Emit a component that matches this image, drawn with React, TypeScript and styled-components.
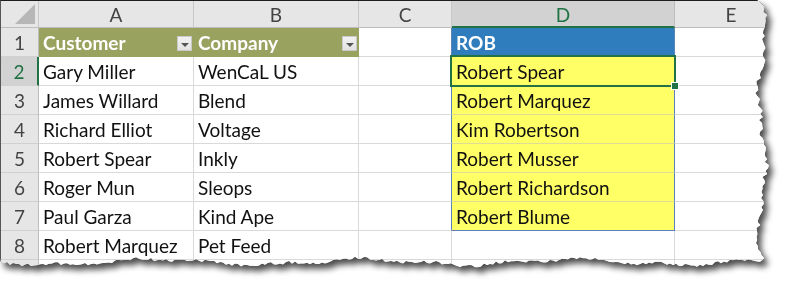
import React from 'react';
import styled, { createGlobalStyle, css } from 'styled-components';

const GlobalStyle = createGlobalStyle`
  html, body { margin: 0; padding: 0; background: #ffffff; }
  body { font-family: Lato, "Noto Sans", sans-serif; }
  #root { width: 788px; height: 289px; }
`;

function makeTorn(): string {
  let seed = 11;
  const rnd = () => {
    seed = (seed * 16807) % 2147483647;
    return seed / 2147483647;
  };
  const pts: string[] = ['0px 0px', '757px 0px'];
  for (let y = 3; y <= 261; y += 3) {
    const wave = Math.sin(y / 21) * 3.4 + Math.sin(y / 8) * 1.6;
    const x = 762 + wave + (rnd() - 0.5) * 4.5;
    pts.push(`${x.toFixed(1)}px ${y}px`);
  }
  for (let x = 760; x >= 0; x -= 3) {
    const wave = Math.sin(x / 33) * 2.8 + Math.sin(x / 12) * 1.3;
    const y = 262 + wave + (rnd() - 0.5) * 3.2;
    pts.push(`${x}px ${y.toFixed(1)}px`);
  }
  pts.push('0px 259px');
  return `polygon(${pts.join(', ')})`;
}

const TORN = makeTorn();

const GREEN = '#217346';
const GRID = '#d9d9d9';
const RANGE = '#5d82b8';

const Frame = styled.div`
  width: 788px;
  height: 289px;
  filter: drop-shadow(0.8px 0.8px 0 #111111) drop-shadow(4px 5px 3px rgba(0, 0, 0, 0.7));
`;

const Sheet = styled.div`
  box-sizing: border-box;
  width: 788px;
  height: 289px;
  display: grid;
  grid-template-columns: 38px 155px 165px 93px 223px 113px;
  grid-template-rows: 27px repeat(9, 29px);
  background: #ffffff;
  border-top: 1px solid #1e1e1e;
  border-left: 1px solid #555;
  clip-path: ${TORN};
  font-family: Lato, "Noto Sans", sans-serif;
  font-size: 19px;
  color: #111;
`;

const Corner = styled.div`
  box-sizing: border-box;
  background: #e6e6e6;
  border-right: 1px solid #c8c8c8;
  border-bottom: 1px solid #bdbdbd;
  position: relative;
  &::after {
    content: '';
    position: absolute;
    right: 3px;
    bottom: 3px;
    width: 0;
    height: 0;
    border-left: 20px solid transparent;
    border-bottom: 20px solid #b7b7b7;
  }
`;

const ColHead = styled.div<{ $selected?: boolean }>`
  box-sizing: border-box;
  display: flex;
  align-items: center;
  justify-content: center;
  background: #e6e6e6;
  color: #444;
  border-right: 1px solid #c8c8c8;
  border-bottom: 1px solid #bdbdbd;
  padding-top: 1px;
  ${(p) =>
    p.$selected &&
    css`
      background: #d2d2d2;
      color: ${GREEN};
      border-bottom: 2px solid ${GREEN};
      border-right-color: #bdbdbd;
    `}
`;

const RowHead = styled.div<{ $selected?: boolean }>`
  box-sizing: border-box;
  display: flex;
  align-items: center;
  justify-content: center;
  background: #e6e6e6;
  color: #444;
  border-right: 1px solid #bdbdbd;
  border-bottom: 1px solid #d0d0d0;
  padding-top: 1px;
  ${(p) =>
    p.$selected &&
    css`
      background: #d2d2d2;
      color: ${GREEN};
      border-right: 2px solid ${GREEN};
    `}
`;

type Tone = 'plain' | 'olive' | 'blue' | 'yellow';

const tones: Record<Tone, ReturnType<typeof css>> = {
  plain: css`
    background: #ffffff;
  `,
  olive: css`
    background: #9aa25f;
    color: #ffffff;
    font-weight: 700;
    border-right-color: #9aa25f;
    border-bottom-color: #9aa25f;
  `,
  blue: css`
    background: #2f7dbd;
    color: #ffffff;
    font-weight: 700;
    border-right-color: ${RANGE};
    border-bottom-color: #2f7dbd;
  `,
  yellow: css`
    background: #ffff66;
    border-right-color: ${RANGE};
    border-bottom-color: #dddd95;
  `,
};

const Cell = styled.div<{ $tone?: Tone; $edgeRight?: boolean; $edgeBottom?: boolean }>`
  box-sizing: border-box;
  position: relative;
  display: flex;
  align-items: center;
  padding: 1px 1px 0 4px;
  border-right: 1px solid ${GRID};
  border-bottom: 1px solid ${GRID};
  white-space: nowrap;
  ${(p) => tones[p.$tone ?? 'plain']}
  ${(p) =>
    p.$edgeRight &&
    css`
      border-right-color: ${RANGE};
    `}
  ${(p) =>
    p.$edgeBottom &&
    css`
      border-bottom-color: ${RANGE};
    `}
`;

const FilterButton = styled.span`
  box-sizing: border-box;
  margin-left: auto;
  margin-top: 2px;
  width: 15px;
  height: 15px;
  background: linear-gradient(#f2f2f2, #e2e2e2);
  border: 1px solid #c9c9c9;
  display: flex;
  align-items: center;
  justify-content: center;
  &::after {
    content: '';
    width: 0;
    height: 0;
    margin-top: 2px;
    border-left: 4px solid transparent;
    border-right: 4px solid transparent;
    border-top: 4px solid #555;
  }
`;

const Selection = styled.span`
  position: absolute;
  z-index: 5;
  left: -2px;
  top: -2px;
  right: -2px;
  bottom: -2px;
  border: 2px solid ${GREEN};
  pointer-events: none;
  &::after {
    content: '';
    position: absolute;
    right: -5px;
    bottom: -5px;
    width: 6px;
    height: 6px;
    background: ${GREEN};
    border: 1px solid #ffffff;
  }
`;

const columns = ['A', 'B', 'C', 'D', 'E'];

const rows: [string, string][] = [
  ['Gary Miller', 'WenCaL US'],
  ['James Willard', 'Blend'],
  ['Richard Elliot', 'Voltage'],
  ['Robert Spear', 'Inkly'],
  ['Roger Mun', 'Sleops'],
  ['Paul Garza', 'Kind Ape'],
  ['Robert Marquez', 'Pet Feed'],
];

const results = [
  'Robert Spear',
  'Robert Marquez',
  'Kim Robertson',
  'Robert Musser',
  'Robert Richardson',
  'Robert Blume',
];

export default function App() {
  return (
    <>
      <GlobalStyle />
      <Frame>
        <Sheet>
          <Corner />
          {columns.map((c) => (
            <ColHead key={c} $selected={c === 'D'}>
              {c}
            </ColHead>
          ))}

          <RowHead>1</RowHead>
          <Cell $tone="olive">
            Customer
            <FilterButton />
          </Cell>
          <Cell $tone="olive">
            Company
            <FilterButton />
          </Cell>
          <Cell $edgeRight />
          <Cell $tone="blue">ROB</Cell>
          <Cell />

          {rows.map(([customer, company], i) => {
            const r = i + 2;
            const result = results[i];
            const inRange = result !== undefined;
            return (
              <React.Fragment key={r}>
                <RowHead $selected={r === 2}>{r}</RowHead>
                <Cell>{customer}</Cell>
                <Cell>{company}</Cell>
                <Cell $edgeRight={inRange} />
                <Cell $tone={inRange ? 'yellow' : 'plain'} $edgeBottom={r === 7}>
                  {result}
                  {r === 2 && <Selection />}
                </Cell>
                <Cell />
              </React.Fragment>
            );
          })}

          <RowHead>9</RowHead>
          <Cell />
          <Cell />
          <Cell />
          <Cell />
          <Cell />
        </Sheet>
      </Frame>
    </>
  );
}
